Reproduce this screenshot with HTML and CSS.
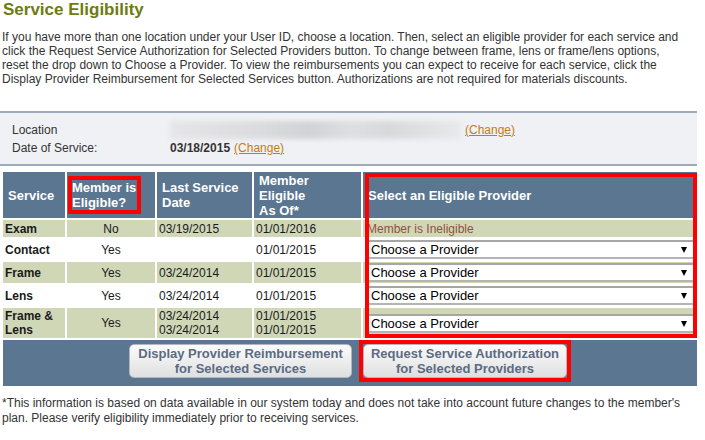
FILE: index.html
```html
<!DOCTYPE html>
<html lang="en">

<head>
    <meta charset="UTF-8" />
    <meta name="viewport" content="width=device-width, initial-scale=1.0" />
    <title>Service Eligibility</title>
    <link rel="stylesheet" href="styles.css">
</head>

<body>
    <h1 class="page-title">Service Eligibility</h1>
    <p class="intro">If you have more than one location under your User ID, choose a location. Then, select an eligible provider for each service and<br>click the Request Service Authorization for Selected Providers button. To change between frame, lens or frame/lens options,<br>reset the drop down to Choose a Provider. To view the reimbursements you can expect to receive for each service, click the<br>Display Provider Reimbursement for Selected Services button. Authorizations are not required for materials discounts.</p>

    <div class="member-info">
        <div class="info-row">
            <span class="info-label">Location</span>
            <span class="info-value"><span class="blurred"></span><a href="#" class="change">(Change)</a></span>
        </div>
        <div class="info-row">
            <span class="info-label">Date of Service:</span>
            <span class="info-value"><b>03/18/2015</b> <a href="#" class="change">(Change)</a></span>
        </div>
    </div>

    <div class="elig-wrap">
        <table class="elig">
            <colgroup>
                <col class="c-service">
                <col class="c-eligible">
                <col class="c-last">
                <col class="c-asof">
                <col class="c-provider">
            </colgroup>
            <thead>
                <tr>
                    <th>Service</th>
                    <th class="th-flag"><span class="flag">Member is<br>Eligible?</span></th>
                    <th>Last Service<br>Date</th>
                    <th>Member<br>Eligible<br>As Of*</th>
                    <th class="th-provider">Select an Eligible Provider</th>
                </tr>
            </thead>
            <tbody>
                <tr class="shade short">
                    <td class="svc">Exam</td>
                    <td class="yn">No</td>
                    <td>03/19/2015</td>
                    <td>01/01/2016</td>
                    <td class="ineligible">Member is Ineligible</td>
                </tr>
                <tr class="plain">
                    <td class="svc">Contact</td>
                    <td class="yn">Yes</td>
                    <td></td>
                    <td>01/01/2015</td>
                    <td class="pick"><div class="select-box"><select><option>Choose a Provider</option></select></div></td>
                </tr>
                <tr class="shade">
                    <td class="svc">Frame</td>
                    <td class="yn">Yes</td>
                    <td>03/24/2014</td>
                    <td>01/01/2015</td>
                    <td class="pick"><div class="select-box"><select><option>Choose a Provider</option></select></div></td>
                </tr>
                <tr class="plain">
                    <td class="svc">Lens</td>
                    <td class="yn">Yes</td>
                    <td>03/24/2014</td>
                    <td>01/01/2015</td>
                    <td class="pick"><div class="select-box"><select><option>Choose a Provider</option></select></div></td>
                </tr>
                <tr class="shade tall">
                    <td class="svc">Frame &amp;<br>Lens</td>
                    <td class="yn">Yes</td>
                    <td>03/24/2014<br>03/24/2014</td>
                    <td>01/01/2015<br>01/01/2015</td>
                    <td class="pick"><div class="select-box"><select><option>Choose a Provider</option></select></div></td>
                </tr>
            </tbody>
            <tfoot>
                <tr>
                    <td colspan="5" class="actions">
                        <div class="action-row">
                            <button class="btn btn-display">Display Provider Reimbursement<br>for Selected Services</button>
                            <div class="btn-flag"><button class="btn btn-request">Request Service Authorization<br>for Selected Providers</button></div>
                        </div>
                    </td>
                </tr>
            </tfoot>
        </table>
        <div class="column-flag"></div>
    </div>

    <p class="note">*This information is based on data available in our system today and does not take into account future changes to the member's<br>plan. Please verify eligibility immediately prior to receiving services.</p>
</body>

</html>
```

FILE: styles.css
```css
body {
    margin: 0;
    font-family: "Liberation Sans", Arial, sans-serif;
    font-size: 12px;
    color: #333;
    background-color: #ffffff;
}

.page-title {
    margin: 0;
    padding: 0 3px;
    font-size: 17px;
    line-height: 20px;
    color: #6c7b13;
}

.intro {
    margin: 10px 0 0 2px;
    line-height: 14px;
}

/* location / date box */
.member-info {
    width: 697px;
    margin-top: 25px;
    padding: 8px 0 7px 12px;
    box-sizing: border-box;
    background-color: #f0f1f5;
    border-top: 2px solid #9daabb;
    border-bottom: 2px solid #9daabb;
}

.info-row {
    display: flex;
    line-height: 18px;
}

.info-label {
    width: 158px;
}

.info-value {
    display: flex;
    align-items: center;
    gap: 4px;
}

.info-value b {
    color: #333;
}

.blurred {
    display: inline-block;
    width: 291px;
    height: 18px;
    background: linear-gradient(90deg, #e6e6e8 0%, #dcdcde 30%, #d2d3d6 48%, #dedfe1 62%, #d9d9db 75%, #e9e9eb 100%);
    filter: blur(2px);
}

.change {
    color: #c47c12;
    text-decoration: underline;
}

/* eligibility table */
.elig-wrap {
    position: relative;
    margin-top: 4px;
}

.elig {
    width: 698px;
    margin-left: 1px;
    table-layout: fixed;
    border-collapse: separate;
    border-spacing: 2px;
}

.c-service { width: 62px; }
.c-eligible { width: 88px; }
.c-last { width: 95px; }
.c-asof { width: 107px; }
.c-provider { width: 334px; }

.elig th {
    height: 46px;
    padding: 0 5px;
    background-color: #5b7690;
    color: #ffffff;
    font-size: 13px;
    line-height: 15px;
    text-align: left;
    vertical-align: middle;
}

.elig th.th-flag {
    padding-left: 1px;
}

.flag {
    display: inline-block;
    border: 4px solid #ff0000;
    padding: 0 1px 0 0;
}

.elig td {
    padding: 0 2px;
    line-height: 14px;
    vertical-align: middle;
    color: #1a1a1a;
}

.shade td {
    background-color: #d0d7b7;
}

.plain td, .shade td { height: 21px; }
.short td { height: 17px; }
.tall td { height: 30px; }

.svc {
    font-weight: bold;
    color: #000;
}

.yn {
    text-align: center;
}

.elig td.ineligible {
    padding-left: 4px;
    color: #94503c;
}

.elig td.pick {
    padding: 0 4px 0 5px;
}

.select-box {
    position: relative;
}

.select-box select {
    display: block;
    width: 100%;
    height: 19px;
    box-sizing: border-box;
    margin: 0;
    padding: 0 0 0 3px;
    border: none;
    border-top: 2px solid #a6a6a6;
    border-bottom: 2px solid #b4b4b4;
    border-radius: 0;
    background-color: #ffffff;
    font-family: "Liberation Sans", Arial, sans-serif;
    font-size: 13px;
    color: #000;
    appearance: none;
    -webkit-appearance: none;
}

.select-box::after {
    content: "";
    position: absolute;
    right: 6px;
    top: 7px;
    border-left: 3px solid transparent;
    border-right: 3px solid transparent;
    border-top: 6px solid #000;
}

/* button bar */
.elig td.actions {
    height: 46px;
    padding: 0;
    background-color: #5b7690;
    vertical-align: top;
}

.action-row {
    display: flex;
    justify-content: center;
    align-items: flex-start;
    gap: 7px;
}

.btn {
    height: 34px;
    padding: 1px 0;
    box-sizing: border-box;
    border: 1px solid #b3b7bd;
    border-radius: 5px;
    background: linear-gradient(#fbfbfb, #eeeeee 50%, #dedfe0);
    font-family: "Liberation Sans", Arial, sans-serif;
    font-size: 13px;
    font-weight: bold;
    line-height: 15px;
    color: #5a6b82;
    text-align: center;
    cursor: pointer;
}

.btn-display {
    width: 223px;
    margin-top: 4px;
}

.btn-flag {
    border: 4px solid #ff0000;
}

.btn-request {
    display: block;
    width: 204px;
}

/* highlight over provider column */
.column-flag {
    position: absolute;
    left: 365px;
    top: 3px;
    width: 332px;
    height: 165px;
    box-sizing: border-box;
    border: 4px solid #ff0000;
    pointer-events: none;
}

.note {
    margin: 8px 0 0 2px;
    line-height: 15px;
}
```
